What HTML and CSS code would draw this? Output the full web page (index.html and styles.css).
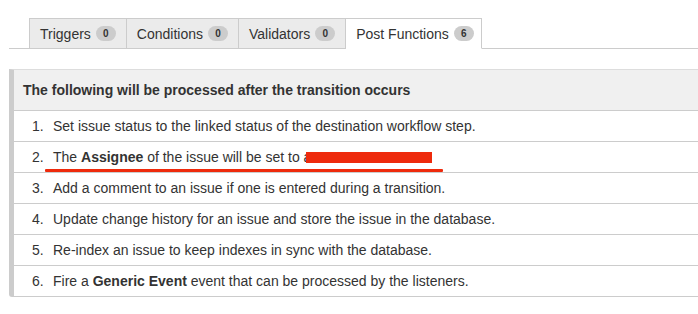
FILE: index.html
```html
<!DOCTYPE html>
<html lang="en">
<head>
    <meta charset="UTF-8">
    <title>Transition - Post Functions</title>
    <link rel="stylesheet" href="styles.css">
</head>
<body>
    <div class="page">
        <ul class="tabs">
            <li class="tab">Triggers <span class="badge">0</span></li>
            <li class="tab">Conditions <span class="badge">0</span></li>
            <li class="tab">Validators <span class="badge">0</span></li>
            <li class="tab active">Post Functions <span class="badge">6</span></li>
        </ul>

        <div class="panel">
            <div class="panel-header">The following will be processed after the transition occurs</div>
            <ol class="functions">
                <li class="item"><span class="num">1.</span>Set issue status to the linked status of the destination workflow step.</li>
                <li class="item marked"><span class="num">2.</span>The <b>Assignee</b> of the issue will be set to <span class="redacted">a</span><span class="scribble"></span></li>
                <li class="item"><span class="num">3.</span>Add a comment to an issue if one is entered during a transition.</li>
                <li class="item"><span class="num">4.</span>Update change history for an issue and store the issue in the database.</li>
                <li class="item"><span class="num">5.</span>Re-index an issue to keep indexes in sync with the database.</li>
                <li class="item"><span class="num">6.</span>Fire a <b>Generic Event</b> event that can be processed by the listeners.</li>
            </ol>
        </div>
    </div>
</body>
</html>
```

FILE: styles.css
```css
body {
    margin: 0;
    font-family: "Liberation Sans", Arial, sans-serif;
    font-size: 14px;
    color: #333;
    background: #fff;
}
.page {
    padding: 18px 0 0 9px;
}
.tabs {
    display: flex;
    margin: 0;
    padding: 0 0 0 20px;
    list-style: none;
    border-bottom: 1px solid #ccc;
}
.tab {
    display: flex;
    align-items: center;
    gap: 5px;
    height: 29px;
    padding: 0 10px 0 10px;
    background: #ebebeb;
    border: 1px solid #ccc;
    border-left: none;
    margin-bottom: -1px;
}
.tab:first-child {
    border-left: 1px solid #ccc;
}
.tab.active {
    background: #fff;
    border-bottom-color: #fff;
    padding-right: 7px;
}
.badge {
    display: inline-block;
    min-width: 20px;
    height: 15px;
    line-height: 15px;
    border-radius: 8px;
    background: #ccc;
    font-size: 10px;
    font-weight: bold;
    text-align: center;
    color: #333;
}
.panel {
    margin-top: 20px;
    border-left: 5px solid #ccc;
    border-top: 1px solid #ddd;
    border-bottom-left-radius: 3px;
}
.panel-header {
    height: 40px;
    line-height: 40px;
    padding-left: 9px;
    background: #f0f0f0;
    font-weight: bold;
    border-bottom: 1px solid #ccc;
}
.functions {
    margin: 0;
    padding: 0;
    list-style: none;
}
.item {
    position: relative;
    height: 30px;
    line-height: 31px;
    padding-left: 18px;
    border-bottom: 1px solid #ccc;
}
.num {
    display: inline-block;
    width: 21px;
}
.redacted {
    display: inline-block;
}
.scribble {
    position: absolute;
    left: 292px;
    top: 10px;
    width: 126px;
    height: 11px;
    background: #ee2a0c;
}
.marked::after {
    content: "";
    position: absolute;
    left: 31px;
    top: 27px;
    width: 398px;
    height: 3px;
    background: #ee2a0c;
    border-radius: 1px;
}
```
